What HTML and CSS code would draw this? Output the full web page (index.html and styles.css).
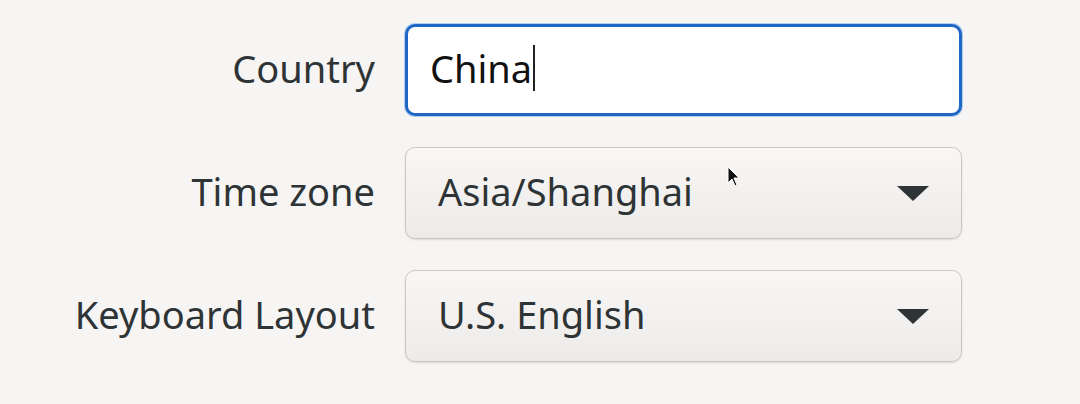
FILE: index.html
```html
<!DOCTYPE html>
<html lang="en">
<head>
  <meta charset="UTF-8">
  <meta name="viewport" content="width=device-width, initial-scale=1.0">
  <title>Location</title>
  <link rel="stylesheet" href="styles.css">
</head>
<body>

  <div class="form">
    <div class="form-row">
      <label class="form-label">Country</label>
      <div class="form-entry form-entry-focus">
        <span class="entry-text">China</span><span class="entry-caret"></span>
      </div>
    </div>
    <div class="form-row">
      <label class="form-label">Time zone</label>
      <div class="form-combo">
        <span class="combo-text">Asia/Shanghai</span>
        <svg class="combo-arrow" width="34" height="17" viewBox="0 0 34 17"><path d="M1 1 L33 1 L17 16 Z" fill="#2e3436"/></svg>
      </div>
    </div>
    <div class="form-row">
      <label class="form-label">Keyboard Layout</label>
      <div class="form-combo">
        <span class="combo-text">U.S. English</span>
        <svg class="combo-arrow" width="34" height="17" viewBox="0 0 34 17"><path d="M1 1 L33 1 L17 16 Z" fill="#2e3436"/></svg>
      </div>
    </div>

    <svg class="pointer" width="14" height="22" viewBox="0 0 14 22"><path d="M1 1 L1 17 L5 13 L8 20 L10 19 L7 12 L12 12 Z" fill="#111" stroke="#fff" stroke-width="1"/></svg>
  </div>

</body>
</html>
```

FILE: styles.css
```css
html, body {
  margin: 0;
  padding: 0;
  background: #f6f5f4;
}

body {
  font-family: "Noto Sans", "DejaVu Sans", sans-serif;
  color: #2e3436;
}

.form {
  position: relative;
  width: 1080px;
  height: 404px;
  padding-top: 24px;
  box-sizing: border-box;
  display: flex;
  flex-direction: column;
  gap: 31px;
}

.form-row {
  display: flex;
  align-items: center;
  gap: 30px;
  height: 92px;
}

.form-label {
  width: 375px;
  text-align: right;
  font-size: 38px;
  margin-top: -4px;
}

.form-entry, .form-combo {
  width: 557px;
  height: 92px;
  box-sizing: border-box;
  border-radius: 10px;
  display: flex;
  align-items: center;
  font-size: 38px;
}

.form-entry {
  background: #fff;
  border: 3px solid #1f67c4;
  box-shadow: 0 0 0 1px rgba(53, 132, 228, 0.35);
  padding-left: 22px;
  padding-bottom: 4px;
  color: #111;
}

.entry-caret {
  display: inline-block;
  width: 2px;
  height: 46px;
  background: #222;
  margin-left: 1px;
}

.form-combo {
  background: linear-gradient(#f8f7f6, #edebe9);
  border: 1px solid #cdc7c2;
  box-shadow: 0 1px 2px rgba(0, 0, 0, 0.12);
  padding: 0 31px 4px 32px;
  justify-content: space-between;
}

.combo-arrow {
  display: block;
  margin-top: 4px;
}

.pointer {
  position: absolute;
  left: 727px;
  top: 166px;
}
```
